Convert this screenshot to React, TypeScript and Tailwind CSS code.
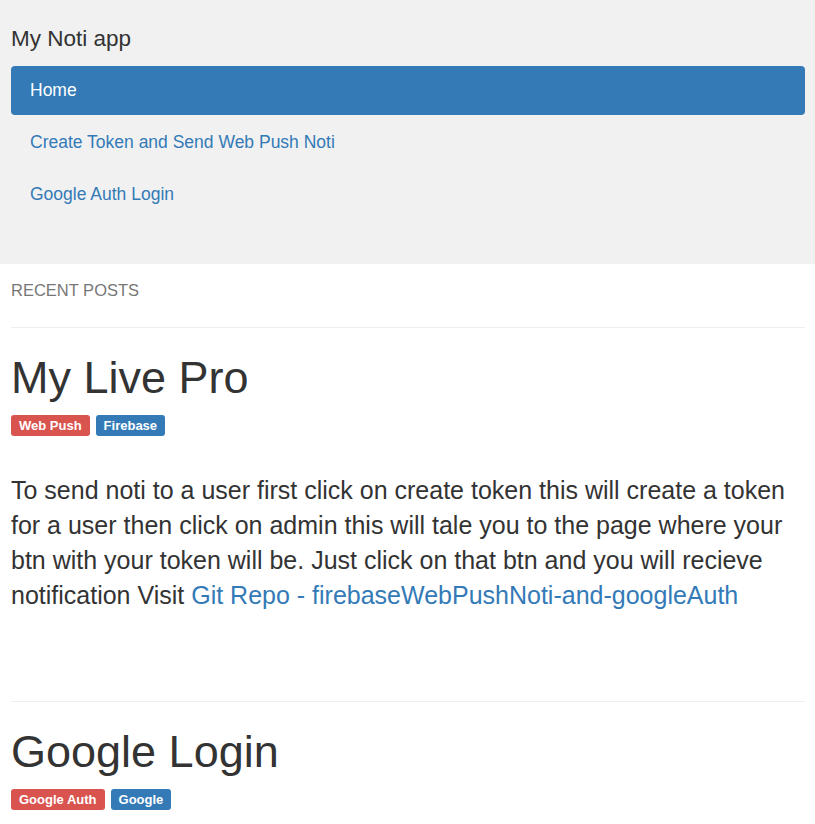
export default function App() {
  const navLinks = [
    { name: "Home", id: 1, active: true },
    { name: "Create Token and Send Web Push Noti", id: 2, active: false },
    { name: "Google Auth Login", id: 3, active: false },
  ];

  const posts = [
    {
      id: 1,
      title: "My Live Pro",
      tags: [
        { name: "Web Push", color: "bg-[#d9534f]" },
        { name: "Firebase", color: "bg-[#337ab7]" },
      ],
      body: "To send noti to a user first click on create token this will create a token for a user then click on admin this will tale you to the page where your btn with your token will be. Just click on that btn and you will recieve notification Visit ",
      link: "Git Repo - firebaseWebPushNoti-and-googleAuth",
    },
    {
      id: 2,
      title: "Google Login",
      tags: [
        { name: "Google Auth", color: "bg-[#d9534f]" },
        { name: "Google", color: "bg-[#337ab7]" },
      ],
      body: "",
      link: "",
    },
  ];

  return (
    <main className="min-h-screen bg-white text-[#333] font-['Liberation_Sans',Arial,sans-serif]">
      <div className="bg-[#f1f1f1] pl-[11px] pr-[10px] pt-[26px] pb-[45px]">
        <h4 className="text-[22.5px] leading-[26px] m-0">My Noti app</h4>
        <ul className="mt-[14px] flex flex-col gap-[3px]">
          {navLinks.map((link) => (
            <li key={link.id}>
              <a
                href="#"
                className={
                  link.active
                    ? "block h-[49px] rounded-[4px] bg-[#337ab7] px-[19px] text-[17.5px] leading-[49px] text-white"
                    : "block h-[49px] rounded-[4px] px-[19px] text-[17.5px] leading-[49px] text-[#337ab7]"
                }
              >
                {link.name}
              </a>
            </li>
          ))}
        </ul>
      </div>

      <div className="pl-[11px] pr-[10px]">
        <h5 className="mt-[16px] text-[16.5px] leading-[20px] text-[#777]">RECENT POSTS</h5>
        {posts.map((post) => (
          <div key={post.id}>
            <hr className={post.id == 1 ? "mt-[27px] border-0 border-t border-[#eee]" : "mt-[88px] border-0 border-t border-[#eee]"} />
            <h1 className="mt-[25px] text-[45px] leading-[50px]">{post.title}</h1>
            <div className="mt-[12px] flex gap-[6px]">
              {post.tags.map((tag) => (
                <span
                  key={tag.name}
                  className={`${tag.color} h-[21px] rounded-[3px] px-[8px] text-[13px] font-bold leading-[21px] text-white`}
                >
                  {tag.name}
                </span>
              ))}
            </div>
            {post.body ? (
              <p className="mt-[37px] text-[25px] leading-[35px]">
                {post.body}
                <a href="#" className="text-[#337ab7]">
                  {post.link}
                </a>
              </p>
            ) : (
              ""
            )}
          </div>
        ))}
      </div>
    </main>
  );
}
